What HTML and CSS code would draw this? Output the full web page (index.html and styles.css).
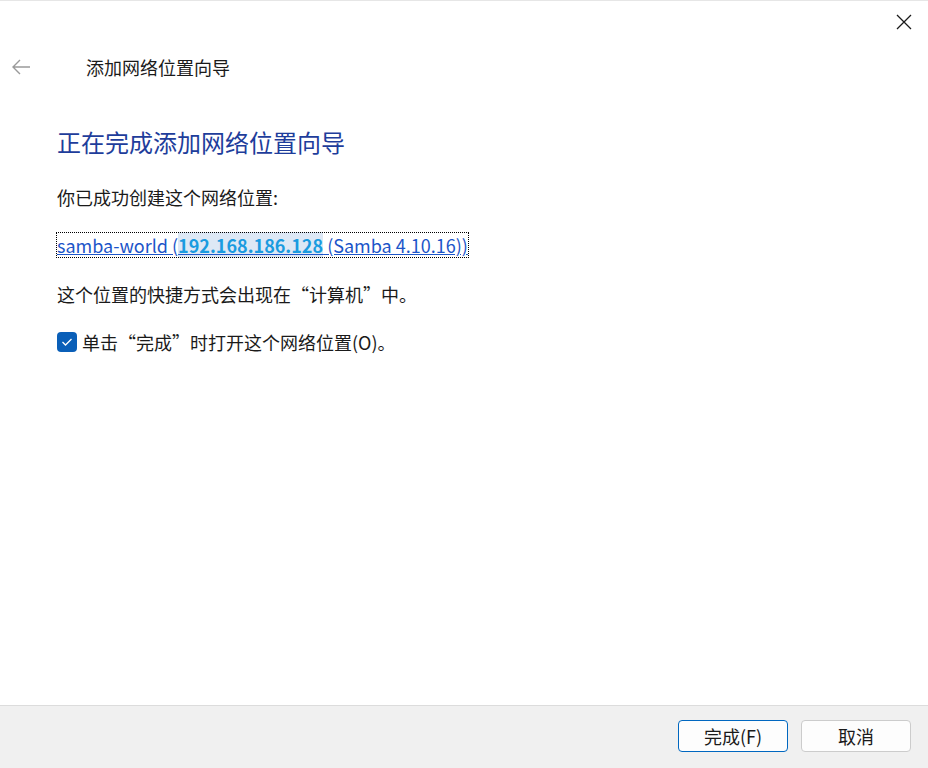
FILE: index.html
```html
<!DOCTYPE html>
<html lang="zh-CN">
<head>
<meta charset="utf-8">
<link rel="stylesheet" href="styles.css">
</head>
<body>
<div class="dialog">
  <div class="topbar">
    <button class="close" aria-label="关闭">
      <svg width="16" height="16" viewBox="0 0 16 16"><path d="M1 1 L15 15 M15 1 L1 15" stroke="#1a1a1a" stroke-width="1.3" fill="none"/></svg>
    </button>
  </div>
  <div class="header">
    <span class="back">
      <svg width="20" height="16" viewBox="0 0 20 16"><path d="M19 8 H2 M9 1 L2 8 L9 15" stroke="#9a9a9a" stroke-width="1.4" fill="none"/></svg>
    </span>
    <span class="wtitle">添加网络位置向导</span>
  </div>
  <main class="content">
    <h1 class="heading">正在完成添加网络位置向导</h1>
    <p class="line">你已成功创建这个网络位置:</p>
    <p class="line linkline"><a class="link" href="#">samba-world (<span class="sel">192.168.186.128</span> (Samba 4.10.16))</a></p>
    <p class="line">这个位置的快捷方式会出现在“计算机”中。</p>
    <label class="check">
      <span class="box"><svg width="12" height="10" viewBox="0 0 12 10"><path d="M1.5 5 L4.5 8 L10.5 2" stroke="#fff" stroke-width="1.3" fill="none"/></svg></span>
      <span>单击“完成”时打开这个网络位置(O)。</span>
    </label>
  </main>
  <footer class="footer">
    <button class="btn primary">完成(F)</button>
    <button class="btn">取消</button>
  </footer>
</div>
</body>
</html>
```

FILE: styles.css
```css
* { box-sizing: border-box; }
html, body { margin: 0; padding: 0; }
body {
  width: 928px;
  height: 768px;
  background: #fff;
  font-family: "Noto Sans CJK SC", "Noto Sans", sans-serif;
  color: #1a1a1a;
  overflow: hidden;
}
.dialog {
  height: 768px;
  display: flex;
  flex-direction: column;
  border-top: 1px solid #e6e6e6;
}
.topbar {
  height: 44px;
  display: flex;
  justify-content: flex-end;
  align-items: flex-start;
}
.close {
  margin-top: 13px;
  margin-right: 16px;
  width: 16px;
  height: 16px;
  padding: 0;
  border: 0;
  background: none;
  display: flex;
}
.header {
  display: flex;
  align-items: center;
  height: 44px;
}
.back {
  display: flex;
  margin-left: 11px;
  width: 20px;
}
.wtitle {
  margin-left: 55px;
  font-size: 18px;
  line-height: 24px;
  color: #1a1a1a;
}
.content {
  flex: 1;
  padding: 37px 57px 0 57px;
}
.heading {
  margin: 0;
  font-size: 24px;
  font-weight: normal;
  line-height: 32px;
  color: #1e3d9b;
}
.line {
  margin: 0;
  font-size: 18px;
  line-height: 24px;
}
.heading + .line { margin-top: 27px; }
.linkline { margin-top: 24px; }
.linkline + .line { margin-top: 25px; }
.link {
  display: inline-block;
  color: #1c55c9;
  text-decoration: underline;
  outline: 1px dotted #000;
  outline-offset: 0;
  line-height: 24px;
}
.sel {
  background: #dde8f5;
  color: #1a9be0;
  font-weight: bold;
}
.check {
  margin-top: 24px;
  display: flex;
  align-items: center;
  gap: 5px;
  font-size: 18px;
  line-height: 24px;
}
.box {
  width: 20px;
  height: 20px;
  border-radius: 4px;
  background: #0a5fb8;
  display: flex;
  align-items: center;
  justify-content: center;
}
.footer {
  height: 63px;
  background: #f0f0f0;
  border-top: 1px solid #dcdcdc;
  display: flex;
  justify-content: flex-end;
  align-items: flex-start;
  padding: 14px 17px 0 0;
  gap: 13px;
}
.btn {
  width: 110px;
  height: 32px;
  font-family: inherit;
  font-size: 18px;
  color: #1a1a1a;
  background: #fdfdfd;
  border: 1px solid #cccccc;
  border-radius: 4px;
  padding: 0;
}
.primary {
  border: 1px solid #0067c0;
}
```
